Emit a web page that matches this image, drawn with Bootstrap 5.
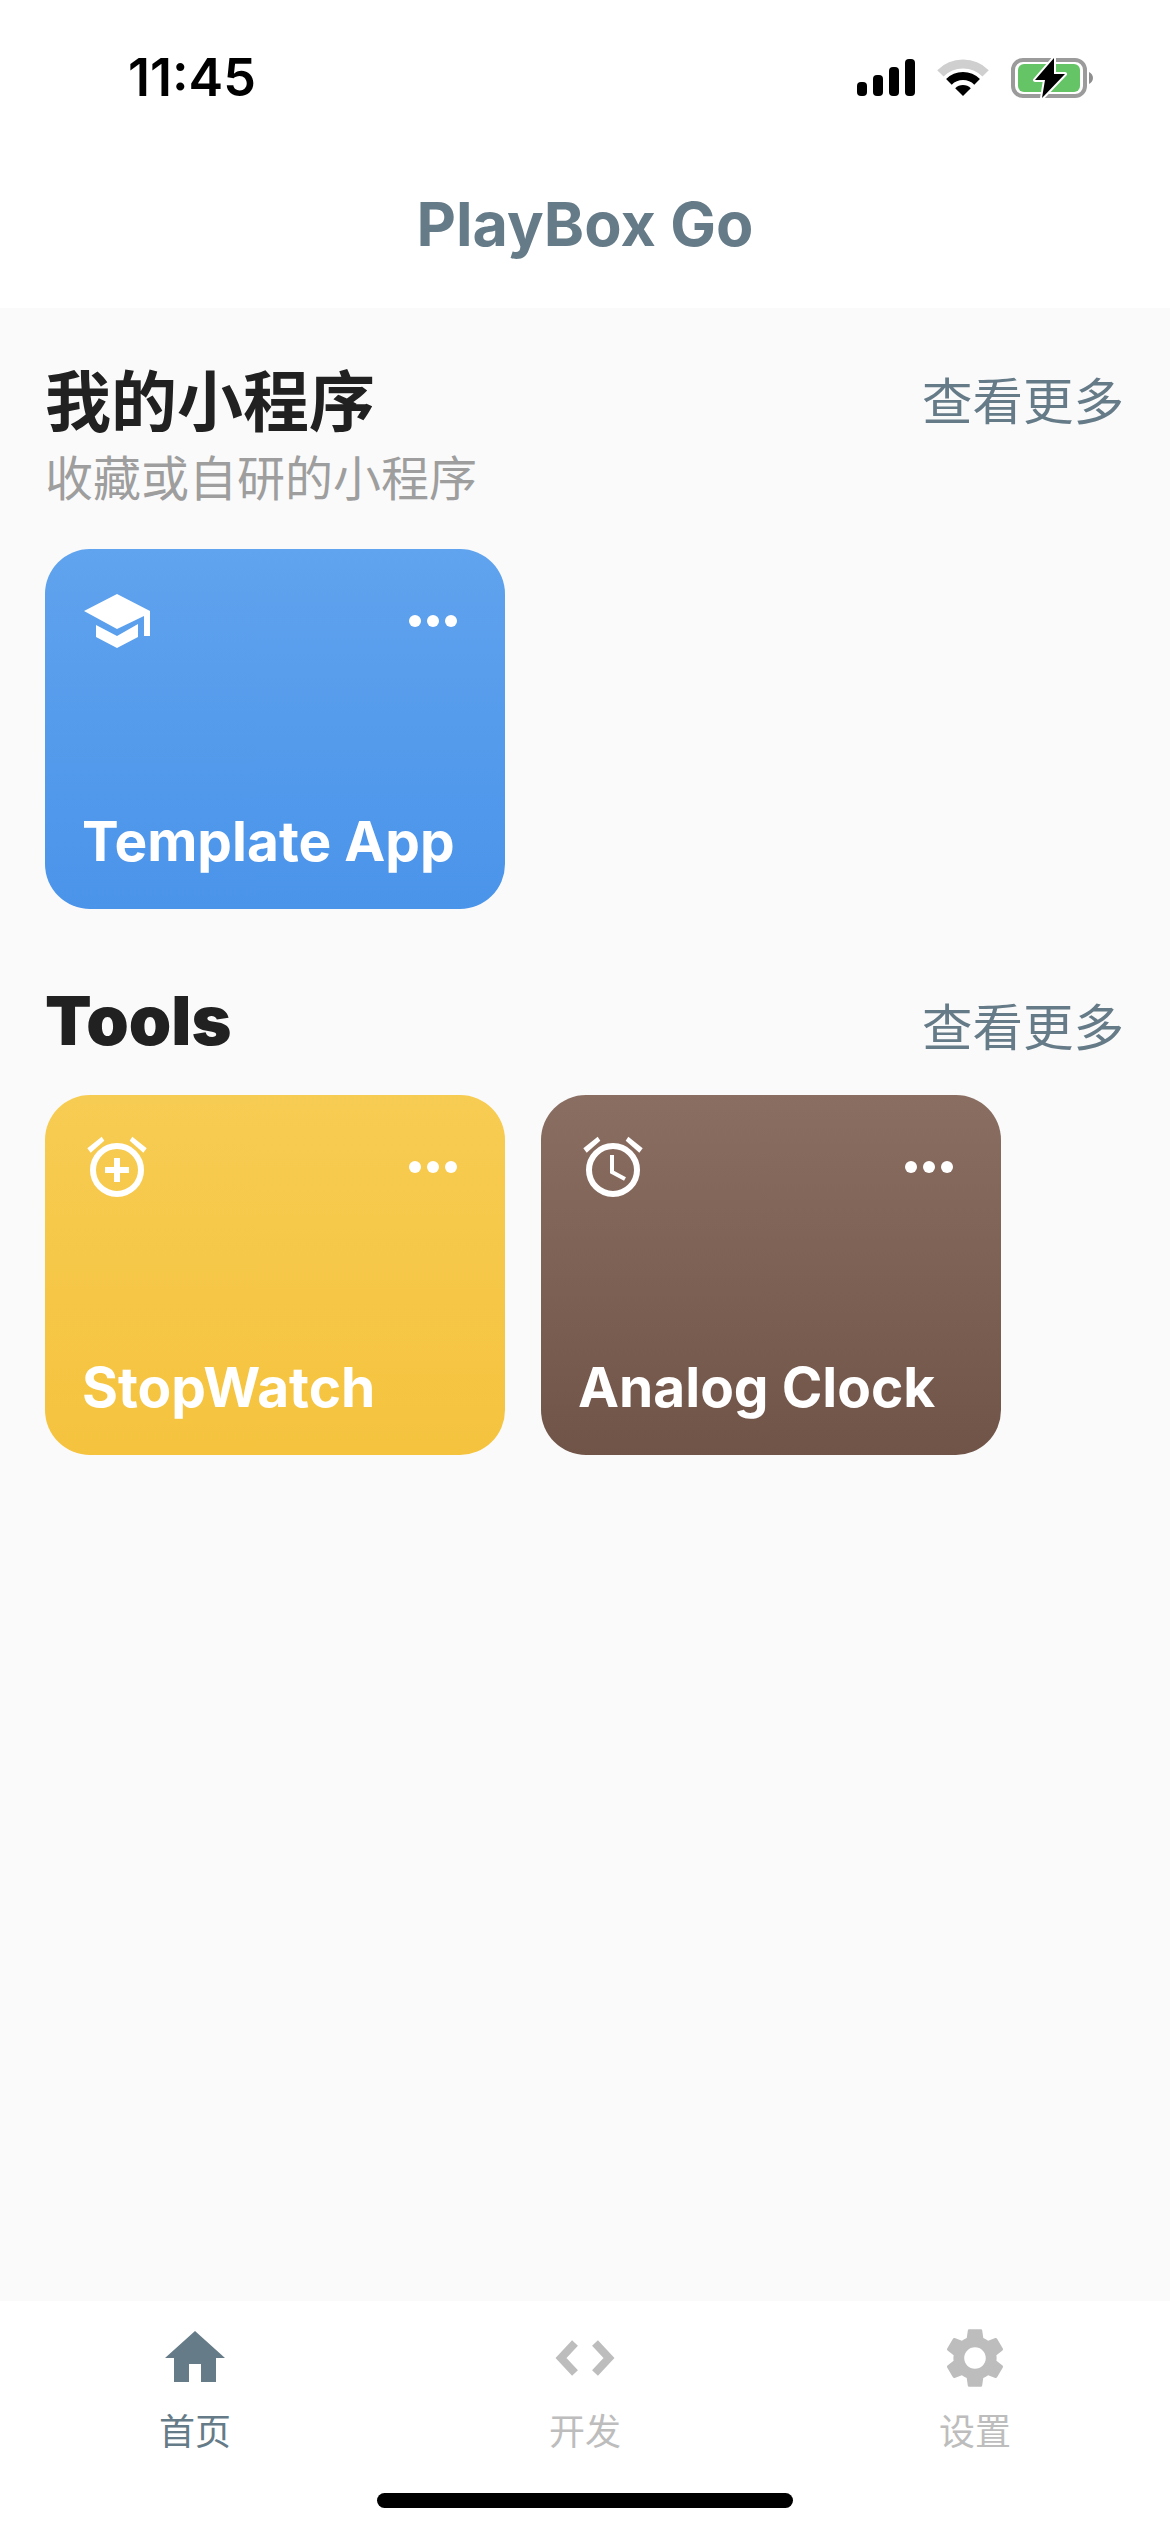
<!DOCTYPE html>
<html lang="zh">
<head>
    <meta charset="UTF-8">
    <meta name="viewport" content="width=device-width, initial-scale=1.0">
    <title>PlayBox Go</title>
    <link href="https://cdn.jsdelivr.net/npm/bootstrap@5.3.0/dist/css/bootstrap.min.css" rel="stylesheet">
    <style>
        body { background: #fff; font-family: Inter, "Noto Sans CJK SC", sans-serif; }
        .app-shell { height: 2532px; }
        .status-row { height: 156px; padding: 0 77px 0 128px; }
        .status-time { font-size: 52px; font-weight: 600; color: #000; line-height: 1; }
        .status-icons { gap: 22px; }
        .app-title { height: 152px; margin: 0; padding-bottom: 14px; font-size: 61px; font-weight: 700; color: #667b88; }
        .app-main { background: #fafafa; padding: 0 46px 0 45px; }
        .group-head { align-items: flex-start; }
        .group-title { margin: 0; font-size: 66px; font-weight: 700; color: #212121; line-height: 84px; }
        .group-title.latin { font-size: 68px; font-weight: 900; }
        .group-sub { font-size: 48px; color: #9e9e9e; line-height: 60px; margin-top: 5px; }
        .group-more { font-size: 50.5px; color: #667b88; line-height: 84px; }
        .group-first { padding-top: 52px; }
        .group-first .group-cards { margin-top: 40px; }
        .group-second { padding-top: 69px; }
        .group-second .group-cards { margin-top: 25px; }
        .group-second .group-more { margin-top: 8px; }
        .group-cards { gap: 36px; }
        .app-tile { width: 460px; height: 360px; border: 0; border-radius: 45px; color: #fff; padding: 36px 48px 0 36px; }
        .app-tile .tile-name { margin: auto 0 0 1px; font-size: 55px; font-weight: 700; line-height: 64px; padding-bottom: 36px; white-space: nowrap; }
        .tile-blue { background: linear-gradient(180deg, #60a3ee, #4a94ea); }
        .tile-yellow { background: linear-gradient(180deg, #f7cc52, #f5c33e); }
        .tile-brown { background: linear-gradient(180deg, #8a6e62, #715448); }
        .tab-bar { background: #fff; height: 231px; }
        .tab-item { padding-top: 21px; color: #bdbdbd; }
        .tab-item.on { color: #667b88; }
        .tab-label { font-size: 36px; line-height: 50px; margin-top: 13px; }
        .home-line { width: 416px; height: 15px; background: #000; border-radius: 8px; margin: 36px auto 0; }
    </style>
</head>
<body>
    <div class="app-shell d-flex flex-column">
        <div class="status-row d-flex justify-content-between align-items-center">
            <span class="status-time">11:45</span>
            <div class="status-icons d-flex align-items-center">
                <svg width="58" height="38" viewBox="0 0 58 38"><rect x="0" y="23" width="10" height="14" rx="4"/><rect x="16" y="16" width="10" height="21" rx="4"/><rect x="32" y="8" width="10" height="29" rx="4"/><rect x="48" y="0" width="10" height="37" rx="4"/></svg>
                <svg width="52" height="38" viewBox="0 0 52 38"><path d="M3.4 14.4A32 32 0 0 1 48.6 14.4" fill="none" stroke="#cfcfcf" stroke-width="9"/><path d="M11.9 22.9A20 20 0 0 1 40.1 22.9" fill="none" stroke="#000" stroke-width="8"/><path d="M26 37L18.2 29.2A11 11 0 0 1 33.8 29.2Z"/></svg>
                <svg width="82" height="44" viewBox="0 0 82 44"><rect x="2" y="4" width="72" height="36" rx="10" fill="none" stroke="#9b9b9b" stroke-width="4"/><rect x="7" y="8" width="62" height="28" rx="6" fill="#65c466"/><path d="M78 16c2 1 4 3 4 6s-2 5-4 6z" fill="#8e8e8e"/><polygon points="43,2 24,24 34,24 31,42 54,18 43,18" fill="#000" stroke="#fff" stroke-width="4" paint-order="stroke" stroke-linejoin="round"/></svg>
            </div>
        </div>
        <h1 class="app-title d-flex justify-content-center align-items-center">PlayBox Go</h1>

        <main class="app-main flex-grow-1">
            <section class="group-first">
                <div class="group-head d-flex justify-content-between">
                    <div>
                        <h2 class="group-title">我的小程序</h2>
                        <div class="group-sub">收藏或自研的小程序</div>
                    </div>
                    <span class="group-more">查看更多</span>
                </div>
                <div class="group-cards d-flex">
                    <div class="card app-tile tile-blue">
                        <div class="d-flex justify-content-between align-items-center">
                            <svg width="72" height="72" viewBox="0 0 72 72" fill="#fff"><polygon points="36,9 3,26 36,44 63,31 63,51 69,51 69,26"/><polygon points="15,40 15,52 36,63 57,52 57,39 36,51"/></svg>
                            <svg width="48" height="12" viewBox="0 0 48 12" fill="#fff"><circle cx="6" cy="6" r="6"/><circle cx="24" cy="6" r="6"/><circle cx="42" cy="6" r="6"/></svg>
                        </div>
                        <div class="tile-name">Template App</div>
                    </div>
                </div>
            </section>

            <section class="group-second">
                <div class="group-head d-flex justify-content-between">
                    <h2 class="group-title latin">Tools</h2>
                    <span class="group-more">查看更多</span>
                </div>
                <div class="group-cards d-flex">
                    <div class="card app-tile tile-yellow">
                        <div class="d-flex justify-content-between align-items-center">
                            <svg width="72" height="72" viewBox="0 0 72 72" fill="#fff"><circle cx="36" cy="39" r="24" fill="none" stroke="#fff" stroke-width="6"/><polygon points="6.3,17.3 20.7,5.7 23.3,9.7 9.7,21.7"/><polygon points="65.7,17.3 51.3,5.7 48.7,9.7 62.3,21.7"/><rect x="33" y="27" width="6" height="24"/><rect x="24" y="36" width="24" height="6"/></svg>
                            <svg width="48" height="12" viewBox="0 0 48 12" fill="#fff"><circle cx="6" cy="6" r="6"/><circle cx="24" cy="6" r="6"/><circle cx="42" cy="6" r="6"/></svg>
                        </div>
                        <div class="tile-name">StopWatch</div>
                    </div>
                    <div class="card app-tile tile-brown">
                        <div class="d-flex justify-content-between align-items-center">
                            <svg width="72" height="72" viewBox="0 0 72 72" fill="#fff"><circle cx="36" cy="39" r="24" fill="none" stroke="#fff" stroke-width="6"/><polygon points="6.3,17.3 20.7,5.7 23.3,9.7 9.7,21.7"/><polygon points="65.7,17.3 51.3,5.7 48.7,9.7 62.3,21.7"/><polyline points="35,24 35,41 48,48" fill="none" stroke="#fff" stroke-width="4"/></svg>
                            <svg width="48" height="12" viewBox="0 0 48 12" fill="#fff"><circle cx="6" cy="6" r="6"/><circle cx="24" cy="6" r="6"/><circle cx="42" cy="6" r="6"/></svg>
                        </div>
                        <div class="tile-name">Analog Clock</div>
                    </div>
                </div>
            </section>
        </main>

        <nav class="tab-bar">
            <div class="row g-0 text-center">
                <div class="col-4 tab-item on">
                    <svg class="d-block mx-auto" width="72" height="72" viewBox="0 0 72 72" fill="currentColor"><path fill-rule="evenodd" d="M36 9L6 36H15V60H57V36H66ZM30 42H42V60H30Z"/></svg>
                    <div class="tab-label">首页</div>
                </div>
                <div class="col-4 tab-item">
                    <svg class="d-block mx-auto" width="72" height="72" viewBox="0 0 72 72" fill="none" stroke="currentColor" stroke-width="8"><polyline points="26,21 12,36 26,51"/><polyline points="46,21 60,36 46,51"/></svg>
                    <div class="tab-label">开发</div>
                </div>
                <div class="col-4 tab-item">
                    <svg class="d-block mx-auto" width="72" height="72" viewBox="0 0 24 24" fill="currentColor"><path d="M19.14 12.94c.04-.3.06-.61.06-.94 0-.32-.02-.64-.07-.94l2.03-1.58c.18-.14.23-.41.12-.61l-1.92-3.32c-.12-.22-.37-.29-.59-.22l-2.39.96c-.5-.38-1.03-.7-1.62-.94l-.36-2.54c-.04-.24-.24-.41-.48-.41h-3.84c-.24 0-.43.17-.47.41l-.36 2.54c-.59.24-1.13.57-1.62.94l-2.39-.96c-.22-.08-.47 0-.59.22L2.74 8.87c-.12.21-.08.47.12.61l2.03 1.58c-.05.3-.09.63-.09.94s.02.64.07.94l-2.03 1.58c-.18.14-.23.41-.12.61l1.92 3.32c.12.22.37.29.59.22l2.39-.96c.5.38 1.03.7 1.62.94l.36 2.54c.05.24.24.41.48.41h3.84c.24 0 .44-.17.47-.41l.36-2.54c.59-.24 1.13-.56 1.62-.94l2.39.96c.22.08.47 0 .59-.22l1.92-3.32c.12-.22.07-.47-.12-.61l-2.01-1.58zM12 15.6c-1.98 0-3.6-1.62-3.6-3.6s1.62-3.6 3.6-3.6 3.6 1.62 3.6 3.6-1.62 3.6-3.6 3.6z"/></svg>
                    <div class="tab-label">设置</div>
                </div>
            </div>
            <div class="home-line"></div>
        </nav>
    </div>
    <script src="https://cdn.jsdelivr.net/npm/bootstrap@5.3.0/dist/js/bootstrap.bundle.min.js"></script>
</body>
</html>
